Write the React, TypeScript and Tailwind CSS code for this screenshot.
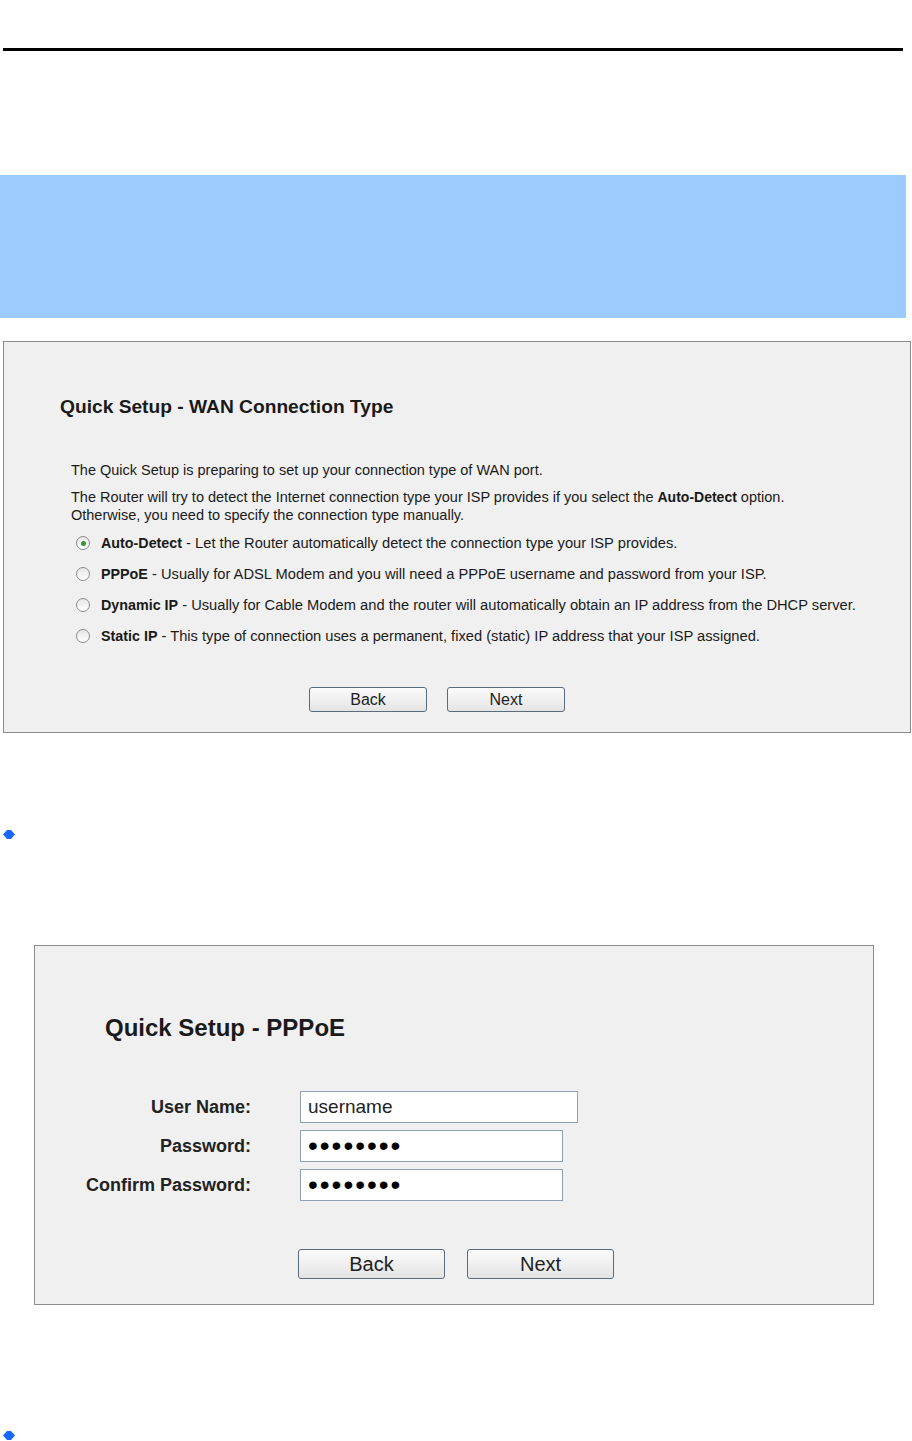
import React from 'react';

const font = { fontFamily: '"Liberation Sans", Arial, sans-serif' };

const Radio: React.FC<{ checked?: boolean }> = ({ checked }) => (
  <span className="flex h-[14px] w-[14px] shrink-0 items-center justify-center rounded-full border border-[#8a8a8a] bg-gradient-to-b from-[#e6e6e6] to-white">
    {checked && <span className="h-[5px] w-[5px] rounded-full bg-[#2f9a2f]" />}
  </span>
);

const Btn: React.FC<{ label: string; big?: boolean }> = ({ label, big }) => (
  <button
    className={`flex items-center justify-center rounded-[3px] border border-[#5a6b7b] bg-gradient-to-b from-[#fbfbfb] to-[#e4e4e4] text-[#222] ${
      big ? 'h-[30px] w-[147px] text-[20px]' : 'h-[25px] w-[118px] text-[16px]'
    }`}
  >
    {label}
  </button>
);

const Bullet: React.FC = () => (
  <svg width="12" height="11" viewBox="0 0 12 11" className="ml-[3px] block">
    <path d="M0 5.5 L4 1 L8 1 L12 5.5 L8 10 L4 10 Z" fill="#1a66ff" />
  </svg>
);

const options = [
  { title: 'Auto-Detect', text: ' - Let the Router automatically detect the connection type your ISP provides.', checked: true },
  { title: 'PPPoE', text: ' - Usually for ADSL Modem and you will need a PPPoE username and password from your ISP.' },
  { title: 'Dynamic IP', text: ' - Usually for Cable Modem and the router will automatically obtain an IP address from the DHCP server.' },
  { title: 'Static IP', text: ' - This type of connection uses a permanent, fixed (static) IP address that your ISP assigned.' },
];

const fields = [
  { label: 'User Name:', value: 'username', w: 'w-[278px]' },
  { label: 'Password:', value: '••••••••', w: 'w-[263px]', dots: true },
  { label: 'Confirm Password:', value: '••••••••', w: 'w-[263px]', dots: true },
];

export default function App() {
  return (
    <div className="w-[912px] h-[1441px] overflow-hidden bg-white flex flex-col" style={font}>
      <div className="mt-[48px] ml-[3px] h-[3px] w-[900px] bg-black" />

      <div className="mt-[124px] h-[143px] w-[906px] bg-[#9bcbff]" />

      {/* WAN connection type panel */}
      <div className="mt-[23px] ml-[3px] h-[392px] w-[908px] border border-[#8c8c8c] bg-[#f0f0f0] text-[#1a1a1a]">
        <h2 className="ml-[56px] mt-[54px] text-[19.2px] font-bold leading-[22px]">Quick Setup - WAN Connection Type</h2>
        <div className="ml-[67px] mt-[43px] text-[14.5px] leading-[18px]">
          <p>The Quick Setup is preparing to set up your connection type of WAN port.</p>
          <p className="mt-[9px]">
            The Router will try to detect the Internet connection type your ISP provides if you select the{' '}
            <b className="text-[14px]">Auto-Detect</b> option.
          </p>
          <p className="leading-[19px]">Otherwise, you need to specify the connection type manually.</p>
        </div>
        <div className="ml-[72px] mt-[9px] flex flex-col gap-[13px] text-[14.7px] leading-[18px]">
          {options.map((o) => (
            <div key={o.title} className="flex items-center gap-[11px]">
              <Radio checked={o.checked} />
              <span>
                <b className="text-[14.3px]">{o.title}</b>
                {o.text}
              </span>
            </div>
          ))}
        </div>
        <div className="mt-[42px] ml-[305px] flex gap-[20px]">
          <Btn label="Back" />
          <Btn label="Next" />
        </div>
      </div>

      <div className="mt-[96px]">
        <Bullet />
      </div>

      {/* PPPoE panel */}
      <div className="mt-[105px] ml-[34px] h-[360px] w-[840px] border border-[#8c8c8c] bg-[#f0f0f0] text-[#1a1a1a]">
        <h2 className="ml-[70px] mt-[68px] text-[24px] font-bold leading-[28px]">Quick Setup - PPPoE</h2>
        <div className="mt-[49px] flex flex-col gap-[7px]">
          {fields.map((f) => (
            <div key={f.label} className="flex items-center">
              <span className="w-[216px] text-right text-[18px] font-bold text-[#222]">{f.label}</span>
              <div
                className={`ml-[49px] h-[32px] ${f.w} flex items-center border border-[#8fa0b4] bg-white px-[7px] ${
                  f.dots ? 'text-[28px] leading-none tracking-[2px] text-black' : 'text-[19px] text-[#222]'
                }`}
              >
                {f.value}
              </div>
            </div>
          ))}
        </div>
        <div className="mt-[48px] ml-[263px] flex gap-[22px]">
          <Btn label="Back" big />
          <Btn label="Next" big />
        </div>
      </div>

      <div className="mt-[125px]">
        <Bullet />
      </div>
    </div>
  );
}
